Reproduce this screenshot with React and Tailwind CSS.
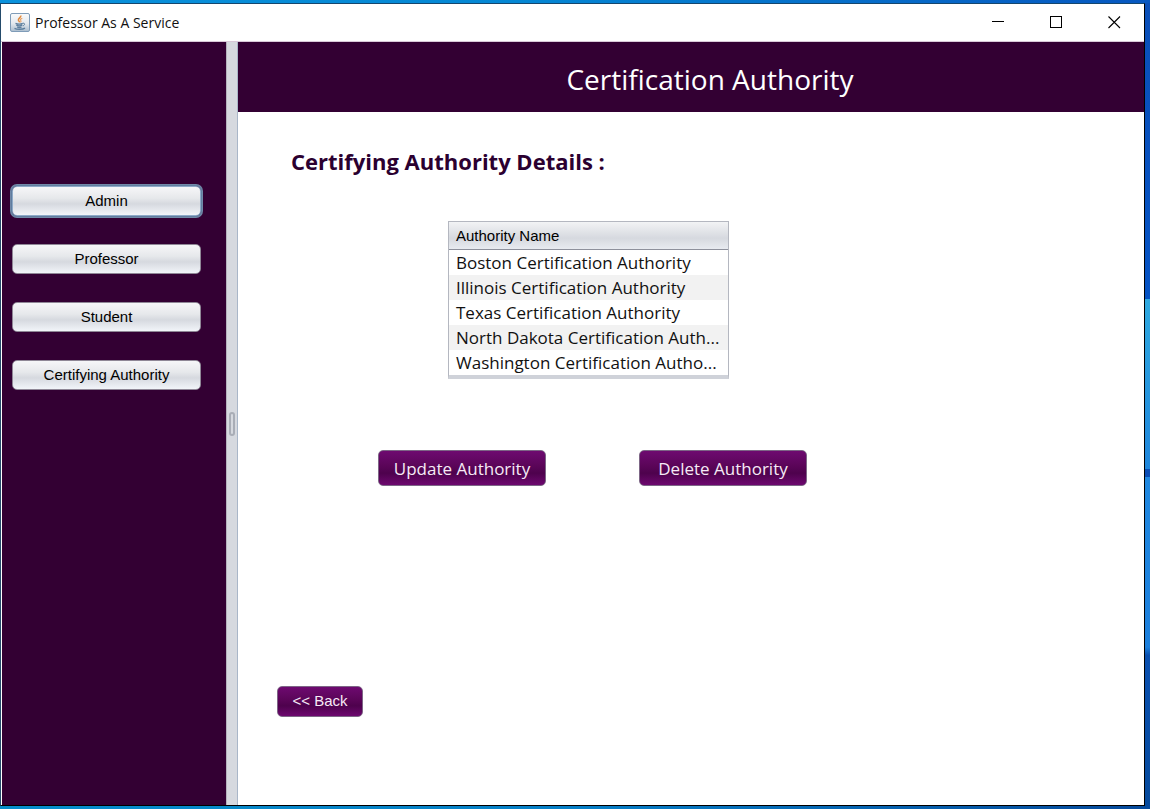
import { useState } from "react";

const sections = ["Admin", "Professor", "Student", "Certifying Authority"];

const authorities = [
  "Boston Certification Authority",
  "Illinois Certification Authority",
  "Texas Certification Authority",
  "North Dakota Certification Auth...",
  "Washington Certification Autho...",
];

function JavaIcon() {
  return (
    <svg width="20" height="20" viewBox="0 0 20 20" aria-hidden="true">
      <defs>
        <linearGradient id="tile" x1="0" y1="0" x2="0" y2="1">
          <stop offset="0" stopColor="#fafbfc" />
          <stop offset="0.55" stopColor="#e4e9ee" />
          <stop offset="1" stopColor="#a9bccd" />
        </linearGradient>
      </defs>
      <rect x="0.5" y="0.5" width="19" height="18" rx="1.5" fill="url(#tile)" stroke="#7f9cb8" />
      <path d="M10.8 2.6c.7 1.8-2.8 2.7-2.4 4.5.2.9 1.1 1.300 1.200 2.300" fill="none" stroke="#e2893c" strokeWidth="1.5" />
      <path d="M12.3 5.2c-1.6.6-2.3 1.3-1.5 2.3.5.7.2 1.3-.3 1.8" fill="none" stroke="#e8a164" strokeWidth="1.1" />
      <path d="M5.500 10.300c1.800.8 5.500.8 7.300 0M6.300 12.200c1.800.8 4.400.8 6 0M7 14c1.500.6 3.200.6 4.600 0" fill="none" stroke="#5d7f9e" strokeWidth="1.3" />
      <path d="M13 10.2c2.300-.3 2.100 1.900-.1 2.700" fill="none" stroke="#5d7f9e" strokeWidth="1" />
      <path d="M4.500 15.300c2.500 1.400 8 1.300 10.500-.2" fill="none" stroke="#5d7f9e" strokeWidth="1.4" />
    </svg>
  );
}

function TitleBar() {
  return (
    <header className="flex h-[38px] shrink-0 items-center border-b border-[#d9c9d9] bg-white pr-[18px] pl-[9px]">
      <JavaIcon />
      <h1 className="ml-[5px] flex-1 font-['Open_Sans','Noto_Sans',sans-serif] text-[14px] text-[#111]">
        Professor As A Service
      </h1>
      <div className="flex gap-[34px] text-black">
        <button type="button" aria-label="Minimize" className="flex w-6 justify-center py-2">
          <svg width="13" height="13" viewBox="0 0 13 13"><path d="M0 5.5h12" stroke="currentColor" /></svg>
        </button>
        <button type="button" aria-label="Maximize" className="flex w-6 justify-center py-2">
          <svg width="13" height="13" viewBox="0 0 13 13"><rect x="0.5" y="0.5" width="11" height="11" fill="none" stroke="currentColor" /></svg>
        </button>
        <button type="button" aria-label="Close" className="flex w-6 justify-center py-2">
          <svg width="13" height="13" viewBox="0 0 13 13"><path d="M0.5 0.5l11.500 11.500M12 0.5l-11.500 11.500" stroke="currentColor" strokeWidth="1.1" /></svg>
        </button>
      </div>
    </header>
  );
}

function NavButton({ label, active, onClick }) {
  const ring = active
    ? "shadow-[0_0_0_1px_#607d9f,0_0_0_2px_#7189a8] border-[#8eaac8]"
    : "border-[#8f8796]";
  return (
    <button
      type="button"
      onClick={onClick}
      className={`h-[30px] w-full rounded-[5px] border bg-[linear-gradient(#f6f6f8,#e6e8eb_40%,#d6d9df_60%,#f2f5f9)] pt-px text-[15px] text-black ${ring}`}
    >
      {label}
    </button>
  );
}

function ActionButton({ children, className }) {
  return (
    <button
      type="button"
      className={`rounded-[5px] border border-[#7d6686] bg-[linear-gradient(#6e0a70,#5a0558_45%,#4e024d_65%,#6d086f)] text-[#f6eaf6] ${className}`}
    >
      {children}
    </button>
  );
}

export default function App() {
  const [active, setActive] = useState("Admin");
  return (
    <div className="flex min-h-screen flex-col bg-[linear-gradient(#0a4fb8,#0553c4_37%,#2fa9e0_37%,#1f86dc_58%,#0b4db5_58%,#0b4db5_59%,#2088e0_59%,#1c7fdc_80%,#0a50b0_81%,#064a9c)] font-['Liberation_Sans',sans-serif]">
      <div className="h-[3px] bg-[linear-gradient(90deg,#0a92dc,#0487d4_45%,#0757c0)]" />
      <div className="mr-[5px] flex flex-1 flex-col border border-t-[#15466d] border-r-black border-b-black border-l-[#244b6b] bg-white">
        <TitleBar />
        <div className="flex flex-1">
          <nav className="ml-px flex w-[224px] shrink-0 flex-col gap-7 bg-[#330033] pt-[144px] pr-[25px] pl-[10px]">
            {sections.map((s) => (
              <NavButton key={s} label={s} active={s === active} onClick={() => setActive(s)} />
            ))}
          </nav>
          <div className="flex w-3 shrink-0 items-center justify-center border-x border-l-[#b5b2bd] border-r-[#a9b6c8] bg-[#d6d9df]">
            <div className="h-6 w-[6px] rounded-[3px] border-2 border-[#a9adb6]" />
          </div>
          <main className="flex min-w-0 flex-1 flex-col">
            <div className="flex h-[70px] shrink-0 items-center justify-center bg-[#330033] pt-1 pl-[38px]">
              <h2 className="font-['Open_Sans','Noto_Sans',sans-serif] text-[28px] leading-9 text-white">Certification Authority</h2>
            </div>
            <div className="flex flex-col pt-[34px] pl-[39px]">
              <h3 className="ml-[14px] font-['Open_Sans','Noto_Sans',sans-serif] text-[22px] leading-[30px] font-bold text-[#2b0030]">
                Certifying Authority Details :
              </h3>
              <div className="mt-[45px] ml-[171px] w-[281px] border border-b-4 border-[#b4b7c0] border-b-[#cfd2d9]">
                <table className="w-full border-collapse">
                  <thead>
                    <tr>
                      <th className="h-[27px] border-b border-[#8e919c] bg-[linear-gradient(#f2f3f5,#d6d9df_60%,#e8ebf0)] px-[7px] pt-[3px] pb-px text-left text-[15px] leading-5 font-normal text-black">
                        Authority Name
                      </th>
                    </tr>
                  </thead>
                  <tbody className="font-['Open_Sans','Noto_Sans',sans-serif] text-[17px]">
                    {authorities.map((name) => (
                      <tr key={name} className="even:bg-[#f2f2f2]">
                        <td className="h-[25px] px-[7px] py-0 leading-[25px] whitespace-nowrap text-[#111]">{name}</td>
                      </tr>
                    ))}
                  </tbody>
                </table>
              </div>
              <div className="mt-[71px] ml-[101px] flex gap-[93px] font-['Open_Sans','Noto_Sans',sans-serif] text-[17px]">
                <ActionButton className="h-9 w-[168px] pt-[2px]">Update Authority</ActionButton>
                <ActionButton className="h-9 w-[168px] pt-[2px]">Delete Authority</ActionButton>
              </div>
              <ActionButton className="mt-[200px] h-[31px] w-[86px] pt-px text-[15px]">&lt;&lt; Back</ActionButton>
            </div>
          </main>
        </div>
      </div>
      <div className="h-[3px] bg-[linear-gradient(90deg,#058ecb,#0780c8_50%,#064a9c)]" />
    </div>
  );
}
